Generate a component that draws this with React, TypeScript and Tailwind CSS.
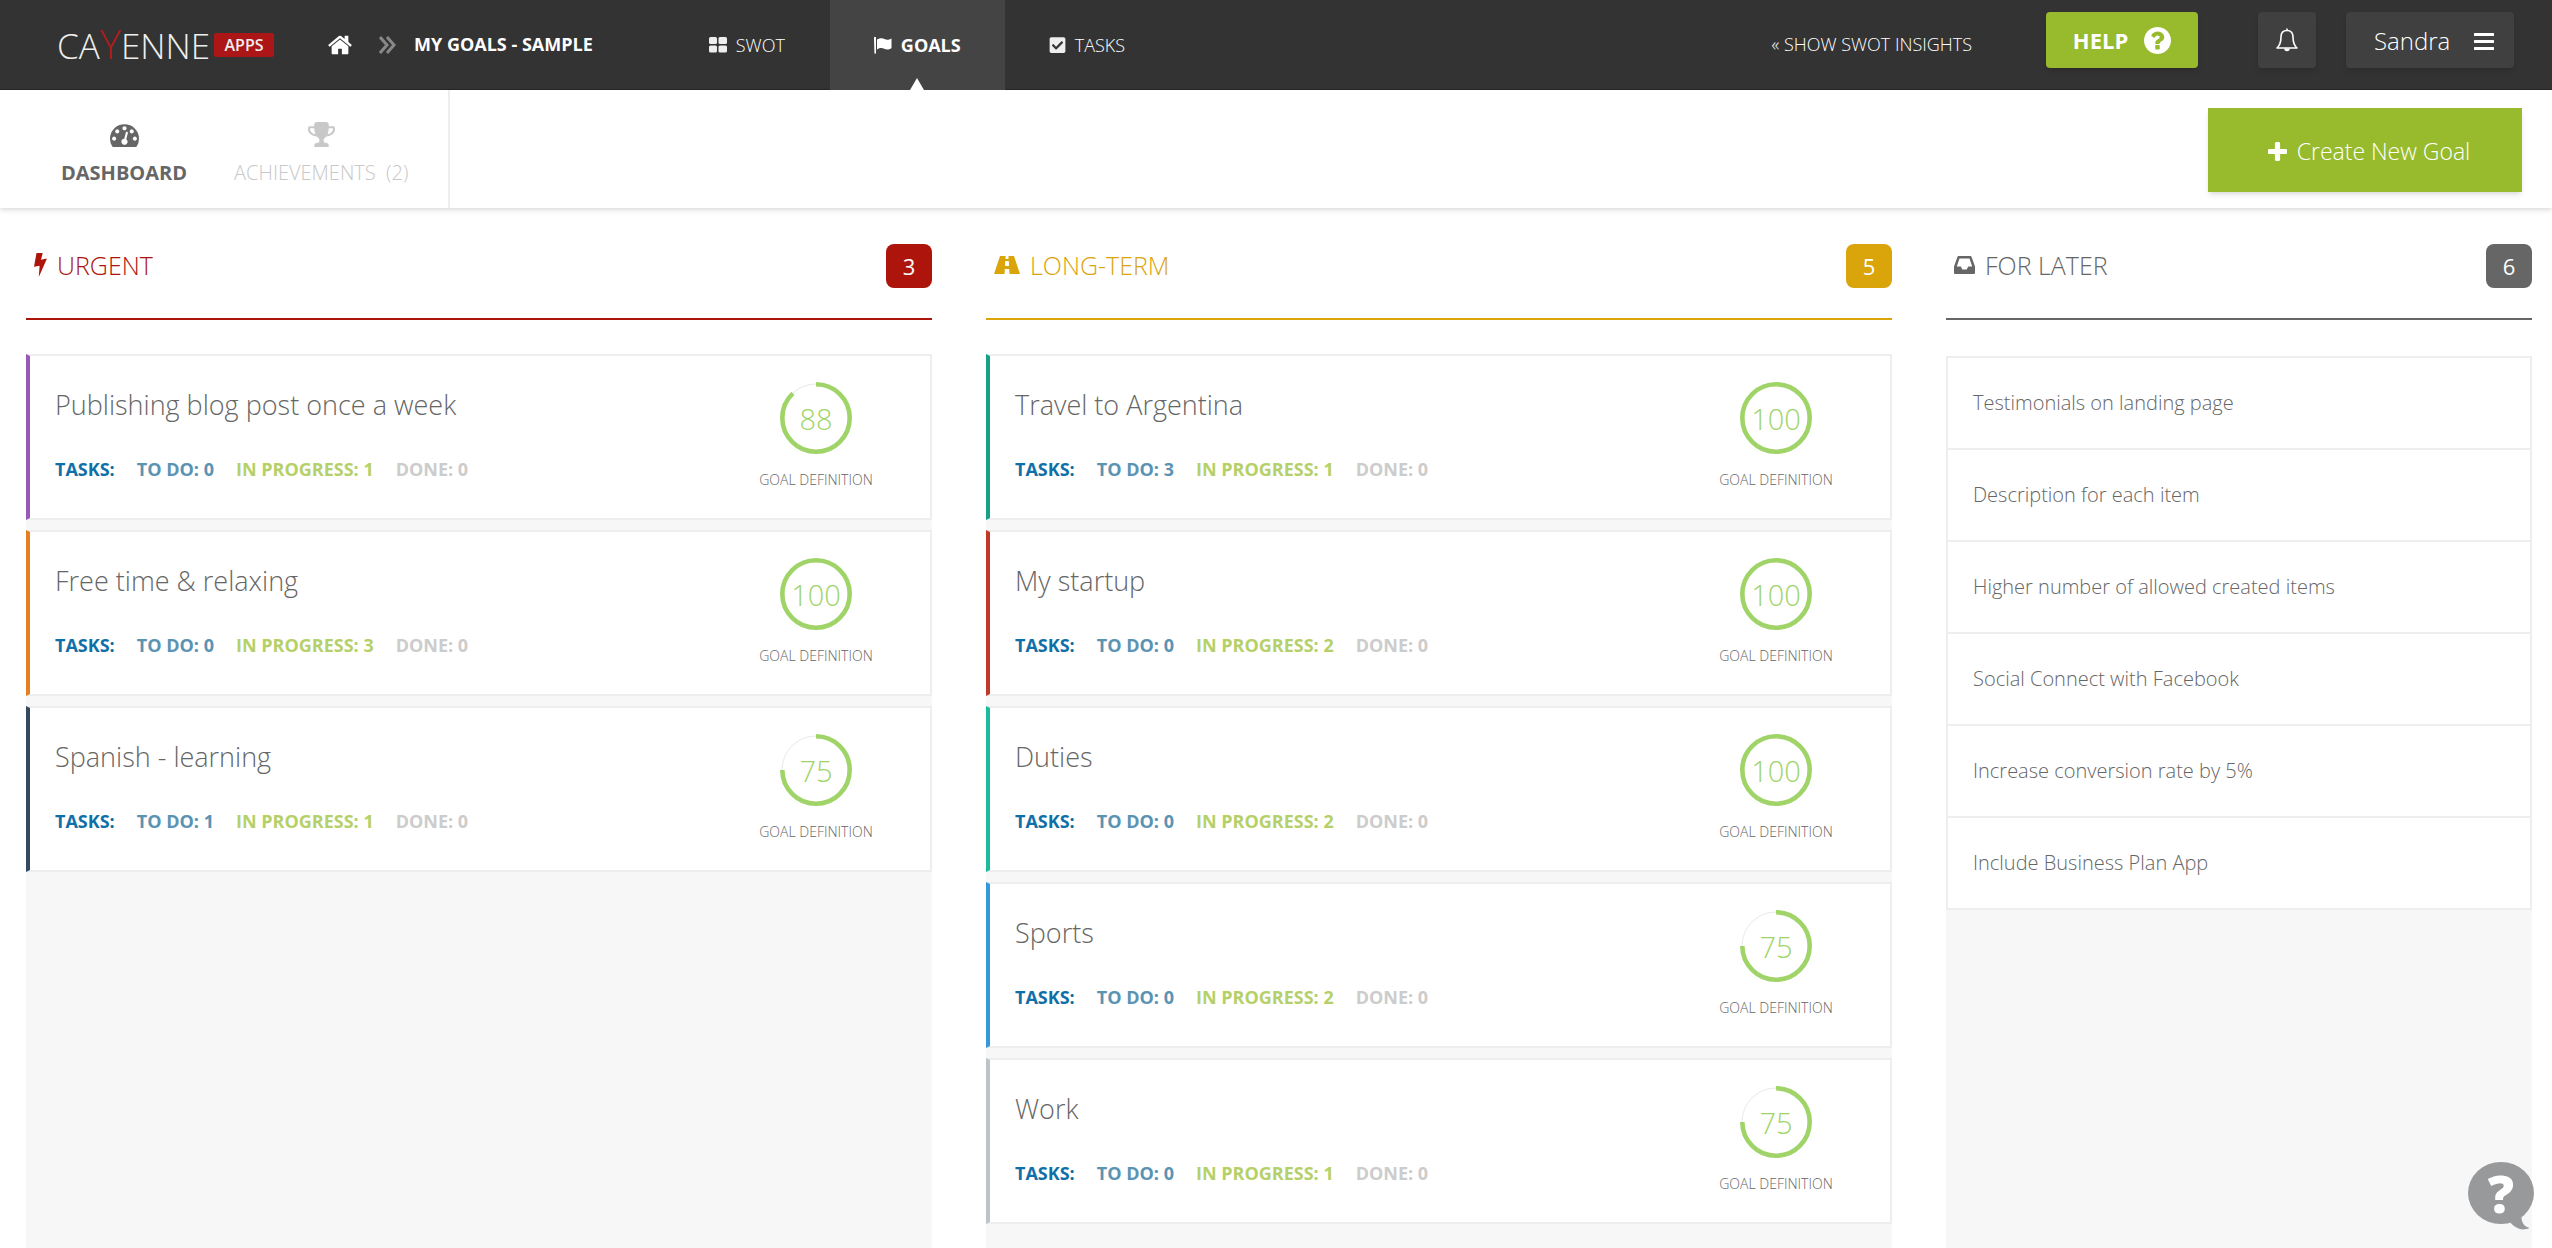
/*Goals dashboard: a top navigation bar, a sub navigation with the create button
and three columns of goals (urgent, long-term and for later) */

import React from 'react';

import { FaCheckSquare } from 'react-icons/fa';

type Goal = {
    title: string //name of the goal
    color: string //color class of the left edge of the card
    score: number //how well the goal is defined, 0 - 100
    todo: number
    progress: number
    done: number
}

type ColumnProps = {
    title: string
    icon: React.ReactNode
    count: number
    headClass: string //text and line color of the heading
    badgeClass: string //background of the counter
    bodyClass: string //space between the heading and the goals
    children: React.ReactNode
}

const urgentGoals: Goal[] = [
    { title: 'Publishing blog post once a week', color: 'border-l-[#9b59b6]', score: 88, todo: 0, progress: 1, done: 0 },
    { title: 'Free time & relaxing', color: 'border-l-[#e67e22]', score: 100, todo: 0, progress: 3, done: 0 },
    { title: 'Spanish - learning', color: 'border-l-[#34495e]', score: 75, todo: 1, progress: 1, done: 0 },
];

const longTermGoals: Goal[] = [
    { title: 'Travel to Argentina', color: 'border-l-[#16a085]', score: 100, todo: 3, progress: 1, done: 0 },
    { title: 'My startup', color: 'border-l-[#c0392b]', score: 100, todo: 0, progress: 2, done: 0 },
    { title: 'Duties', color: 'border-l-[#1abc9c]', score: 100, todo: 0, progress: 2, done: 0 },
    { title: 'Sports', color: 'border-l-[#3498db]', score: 75, todo: 0, progress: 2, done: 0 },
    { title: 'Work', color: 'border-l-[#bdc3c7]', score: 75, todo: 0, progress: 1, done: 0 },
];

const laterGoals: string[] = [
    'Testimonials on landing page',
    'Description for each item',
    'Higher number of allowed created items',
    'Social Connect with Facebook',
    'Increase conversion rate by 5%',
    'Include Business Plan App',
];

//icons drawn on a 1792 grid
const HomeIcon = () => (
    <svg viewBox="0 0 1792 1792" className="w-[26px] h-[26px] fill-white" aria-hidden="true">
        <path d="M1472 992v480q0 26-19 45t-45 19h-384v-384h-256v384h-384q-26 0-45-19t-19-45v-480q0-1 .5-3t.5-3l575-474 575 474q1 2 1 6zm223-69l-62 74q-8 9-21 11h-3q-13 0-21-7l-692-577-692 577q-12 8-24 7-13-2-21-11l-62-74q-8-10-7-23.5t11-21.5l719-599q32-26 76-26t76 26l244 204v-195q0-14 9-23t23-9h192q14 0 23 9t9 23v408l219 182q10 8 11 21.5t-7 23.5z" />
    </svg>
);

const DashboardIcon = () => (
    <svg viewBox="0 0 1792 1792" className="w-[29px] h-[29px] fill-current" aria-hidden="true">
        <path d="M384 1152q0-53-37.5-90.5t-90.5-37.5-90.5 37.5-37.5 90.5 37.5 90.5 90.5 37.5 90.5-37.5 37.5-90.5zm192-448q0-53-37.5-90.5t-90.5-37.5-90.5 37.5-37.5 90.5 37.5 90.5 90.5 37.5 90.5-37.5 37.5-90.5zm428 481l101-382q6-26-7.5-48.5t-38.5-29.5-48 6.500-30 39.500l-101 382q-60 5-107 43.500t-63 98.500q-20 77 20 146t117 89 146-20 89-117q16-60-6-117t-72-91zm660-33q0-53-37.5-90.5t-90.5-37.5-90.5 37.5-37.5 90.5 37.5 90.5 90.5 37.5 90.5-37.5 37.5-90.5zm-640-640q0-53-37.5-90.5t-90.5-37.5-90.5 37.5-37.5 90.5 37.5 90.5 90.5 37.5 90.5-37.5 37.5-90.5zm448 192q0-53-37.5-90.5t-90.5-37.5-90.5 37.5-37.5 90.5 37.5 90.5 90.5 37.5 90.5-37.5 37.5-90.5zm320 448q0 261-141 483-19 29-54 29h-1402q-35 0-54-29-141-221-141-483 0-182 71-348t191-286 286-191 348-71 348 71 286 191 191 286 71 348z" />
    </svg>
);

const TrophyIcon = () => (
    <svg viewBox="0 0 1792 1792" className="w-[29px] h-[29px] fill-current" aria-hidden="true">
        <path d="M522 883q-74-162-74-371h-256v96q0 78 94.5 162t235.5 113zm1078-275v-96h-256q0 209-74 371 141-29 235.5-113t94.5-162zm128-128v128q0 71-41.5 143t-112 130-173 97.5-215.5 44.5q-42 54-95 95-38 34-52.5 72.5t-14.5 89.5q0 54 30.5 91t97.5 37q75 0 133.5 45.5t58.5 114.5v64q0 14-9 23t-23 9h-832q-14 0-23-9t-9-23v-64q0-69 58.5-114.5t133.5-45.5q67 0 97.5-37t30.5-91q0-51-14.5-89.5t-52.5-72.5q-53-41-95-95-113-5-215.5-44.5t-173-97.5-112-130-41.5-143v-128q0-40 28-68t68-28h288v-96q0-66 47-113t113-47h576q66 0 113 47t47 113v96h288q40 0 68 28t28 68z" />
    </svg>
);

const QuestionIcon = () => (
    <svg viewBox="128 128 1536 1536" className="w-[27px] h-[27px] fill-white" aria-hidden="true">
        <path d="M1024 1376v-192q0-14-9-23t-23-9h-192q-14 0-23 9t-9 23v192q0 14 9 23t23 9h192q14 0 23-9t9-23zm256-672q0-88-55.5-163t-138.5-116-170-41q-243 0-371 213-15 24 8 42l132 100q7 6 19 6 16 0 25-12 53-68 86-92 34-24 86-24 48 0 85.5 26t37.5 59q0 38-20 61t-68 45q-63 28-115.5 86.5t-52.5 125.5v36q0 14 9 23t23 9h192q14 0 23-9t9-23q0-19 21.5-49.5t54.5-49.5q32-18 49-28.5t46-35 44.5-48 28-60.5 12.5-81zm384 192q0 209-103 385.5t-279.5 279.5-385.5 103-385.5-103-279.5-279.5-103-385.5 103-385.5 279.5-279.5 385.5-103 385.5 103 279.5 279.5 103 385.5z" />
    </svg>
);

const PlusIcon = () => (
    <svg viewBox="192 128 1408 1408" className="w-[19px] h-[19px] fill-white" aria-hidden="true">
        <path d="M1600 736v192q0 40-28 68t-68 28h-416v416q0 40-28 68t-68 28h-192q-40 0-68-28t-28-68v-416h-416q-40 0-68-28t-28-68v-192q0-40 28-68t68-28h416v-416q0-40 28-68t68-28h192q40 0 68 28t28 68v416h416q40 0 68 28t28 68z" />
    </svg>
);

//smaller icons drawn at their own size
const ChevronsIcon = () => (
    <svg viewBox="0 0 17 18" className="w-[17px] h-[18px] fill-none stroke-[#888]" strokeWidth="3" aria-hidden="true">
        <path d="M1 1l7 8-7 8M8 1l7 8-7 8" />
    </svg>
);

const GridIcon = () => (
    <svg viewBox="0 0 18 16" className="w-[18px] h-4 fill-[#eee]" aria-hidden="true">
        <rect width="8" height="7" rx="1.5" />
        <rect x="9.5" width="8.5" height="7" rx="1.5" />
        <rect y="8.5" width="8" height="7" rx="1.5" />
        <rect x="9.5" y="8.5" width="8.5" height="7" rx="1.5" />
    </svg>
);

const FlagIcon = () => (
    <svg viewBox="0 0 18 17" className="w-[18px] h-[17px] fill-white" aria-hidden="true">
        <path d="M0 .8a1 1 0 0 1 2 0V16a.8.8 0 0 1-1.6 0zM3 2.6c3-1.7 5.2-1.8 7.5-.6 2.5 1.3 4.5.5 7-.6v9.8c-2.8 1.5-4.8 1.8-7.3.6-2.5-1.2-4.5-.8-7.2.7z" />
    </svg>
);

const BellIcon = () => (
    <svg viewBox="0 0 22 24" className="w-[22px] h-6 fill-none stroke-white" strokeWidth="1.6" strokeLinejoin="round" aria-hidden="true">
        <path d="M11 2.5c-4 0-6 2.8-6 6.5 0 5.5-1.2 8.5-4 11h20c-2.8-2.5-4-5.5-4-11 0-3.7-2-6.5-6-6.5zM11 .5v2" />
        <path d="M8.2 20.500a2.800 2.800 0 0 0 5.600 0z" className="fill-white stroke-none" />
    </svg>
);

const BarsIcon = () => (
    <svg viewBox="0 0 20 17" className="w-5 h-[17px] fill-white" aria-hidden="true">
        <rect width="20" height="3" rx=".5" />
        <rect y="7" width="20" height="3" rx=".5" />
        <rect y="14" width="20" height="3" rx=".5" />
    </svg>
);

const BoltIcon = () => (
    <svg viewBox="0 0 13 24" className="w-[13px] h-6 fill-current" aria-hidden="true">
        <path d="M2.5 0h6.200L7 6.800l6-1.300L4.800 24l.8-11.300L0 13.800z" />
    </svg>
);

const RoadIcon = () => (
    <svg viewBox="0 0 26 18" className="w-[26px] h-[18px] fill-current" aria-hidden="true">
        <path fillRule="evenodd" d="M6 0h14l6 18H0zM11.5 0h3v3h-3zM11.2 5h3.600l.2 5h-4zM10.8 13h4.400l.3 5h-5z" />
    </svg>
);

const InboxIcon = () => (
    <svg viewBox="0 0 21 18" className="w-[21px] h-[18px] fill-current" aria-hidden="true">
        <path fillRule="evenodd" d="M4.5 0h12q.8 0 1 .8L21 10.500V17q0 1-1 1H1q-1 0-1-1v-6.500L3.500.8q.2-.8 1-.8zM5.500 2.500L2.800 10.500h4l1.500 3h4.400l1.500-3h4L15.500 2.500z" />
    </svg>
);

//ring that is filled clockwise up to the score
const ScoreRing = ({ score }: { score: number }) => (
    <div className="relative w-[72px] h-[72px]">
        <svg viewBox="0 0 72 72" className="w-full h-full -rotate-90 fill-none" aria-hidden="true">
            <circle cx="36" cy="36" r="34" className="stroke-[#e8e8e8]" />
            <circle
                cx="36"
                cy="36"
                r="33.7"
                pathLength="100"
                strokeWidth="4.6"
                strokeDasharray={score < 100 ? `${score} 100` : undefined}
                className="stroke-[#a0d468]"
            />
        </svg>
        <span
            className="absolute inset-0 flex items-center justify-center text-[29px]
            leading-none font-light text-[#a0d468]"
        >
            {score}
        </span>
    </div>
);

const GoalCard = ({ title, color, score, todo, progress, done }: Goal) => {
    return (
        <article
            className={`flex justify-between h-[166px] bg-white border-2 border-l-4
            border-[#eee] pl-[25px] ${color}`}
        >
            <div>
                <h3 className="pt-[29px] text-[27px] leading-10 font-light">{title}</h3>
                <p className="flex gap-[22px] pt-8 text-[18px] leading-6 font-bold">
                    <span className="text-[#0f6fa8]">TASKS:</span>
                    <span className="text-[#5b93b3]">TO DO: {todo}</span>
                    <span className="text-[#b6d069]">IN PROGRESS: {progress}</span>
                    <span className="text-[#ccc]">DONE: {done}</span>
                </p>
            </div>

            {/*how complete the definition of the goal is */}
            <div className="flex flex-col items-center w-[228px] pt-[26px]">
                <ScoreRing score={score} />
                <p className="mt-4 text-[14px] leading-5 font-light">GOAL DEFINITION</p>
            </div>
        </article>
    );
};

const Column = ({ title, icon, count, headClass, badgeClass, bodyClass, children }: ColumnProps) => {
    return (
        <section className="flex flex-col">
            <div className={`flex items-start justify-between h-[76px] border-b-2 pl-2 ${headClass}`}>
                <h2 className="flex items-center gap-[10px] text-[25px] leading-[42px] font-light">
                    {icon}
                    {title}
                </h2>
                <span
                    className={`flex items-center justify-center w-[46px] h-11 rounded-lg
                    text-[22px] text-white ${badgeClass}`}
                >
                    {count}
                </span>
            </div>
            <div className={`flex-1 bg-[#f7f7f7] ${bodyClass}`}>{children}</div>
        </section>
    );
};

const App = () => {
    return (
        <div className="flex flex-col min-h-screen bg-white font-['Open_Sans',sans-serif] text-[#666]">

            {/*top bar */}
            <header
                className="flex items-center h-[90px] bg-[#333] border-b border-[#2a2628]
                pl-[57px] pr-[38px] text-[18px] text-white"
            >
                <a href="#" className="flex items-center text-[#eee]">
                    <span className="text-[35px] leading-[50px] font-light">
                        CA<span className="text-[40px] leading-[50px] text-[#ac1c1c]">Y</span>ENNE
                    </span>
                    <span
                        className="ml-1 flex items-center justify-center w-[60px] h-6 rounded-xs
                        bg-[#ac1616] text-[16px] font-semibold"
                    >
                        APPS
                    </span>
                </a>
                <a href="#" aria-label="Home" className="ml-[53px]">
                    <HomeIcon />
                </a>
                <span className="ml-[26px]">
                    <ChevronsIcon />
                </span>
                <h1 className="ml-[18px] font-bold">MY GOALS - SAMPLE</h1>

                <nav className="flex self-stretch ml-[71px] -mb-px">
                    <a href="#" className="flex items-center gap-[9px] px-[45px] font-light">
                        <GridIcon />
                        SWOT
                    </a>
                    <a
                        href="#"
                        aria-current="page"
                        className="relative flex items-center gap-[9px] px-11 bg-[#444] font-bold"
                    >
                        <FlagIcon />
                        GOALS
                        <span
                            className="absolute bottom-0 left-1/2 -translate-x-1/2 border-x-[7px]
                            border-b-12 border-x-transparent border-b-white"
                        />
                    </a>
                    <a href="#" className="flex items-center gap-[9px] px-11 font-light">
                        <FaCheckSquare className="w-[17px] h-[18px] fill-[#eee]" />
                        TASKS
                    </a>
                </nav>

                <a href="#" className="ml-auto font-light">« SHOW SWOT INSIGHTS</a>
                <div className="flex self-start mt-3 ml-[74px]">
                    <button
                        className="flex items-center justify-center gap-4 w-[152px] h-14 rounded-sm
                        bg-[#98bb2e] text-[22px] font-bold shadow-md"
                    >
                        HELP
                        <QuestionIcon />
                    </button>
                    <button
                        aria-label="Notifications"
                        className="flex items-center justify-center w-[58px] h-14 ml-[60px]
                        rounded-sm bg-[#404040] shadow-md"
                    >
                        <BellIcon />
                    </button>
                    <button
                        className="flex items-center justify-between w-[168px] h-14 ml-[30px] pl-7
                        pr-5 pt-0.5 rounded-sm bg-[#404040] text-[24px] font-light shadow-md"
                    >
                        Sandra
                        <BarsIcon />
                    </button>
                </div>
            </header>

            {/*sub navigation */}
            <div className="flex justify-between h-[118px] pr-[30px] shadow-[0_2px_5px_rgba(0,0,0,0.15)]">
                <nav className="flex gap-[47px] pt-[30px] pl-[61px] pr-10 border-r-2 border-[#eee] text-[20px] leading-7">
                    <a href="#" aria-current="page" className="flex flex-col items-center gap-[10px] font-bold">
                        <DashboardIcon />
                        DASHBOARD
                    </a>
                    <a href="#" className="flex flex-col items-center gap-[10px] font-light text-[#c8c8c8]">
                        <TrophyIcon />
                        <span className="whitespace-pre">ACHIEVEMENTS  (2)</span>
                    </a>
                </nav>
                <button
                    className="flex items-center justify-center gap-[10px] w-[314px] h-[84px] mt-[18px]
                    pt-0.5 pl-2 bg-[#98bb2e] text-[23px] font-light text-white shadow-md"
                >
                    <PlusIcon />
                    Create New Goal
                </button>
            </div>

            {/*goal columns */}
            <main className="flex-1 grid grid-cols-[906fr_906fr_586fr] gap-[54px] pt-9 pl-[26px] pr-5">
                <Column
                    title="URGENT"
                    icon={<BoltIcon />}
                    count={3}
                    headClass="border-[#ac140c] text-[#ac140c]"
                    badgeClass="bg-[#ac140c]"
                    bodyClass="mt-[34px]"
                >
                    <div className="flex flex-col gap-[10px]">
                        {
                            urgentGoals.map((goal) => <GoalCard key={goal.title} {...goal} />)
                        }
                    </div>
                </Column>

                <Column
                    title="LONG-TERM"
                    icon={<RoadIcon />}
                    count={5}
                    headClass="border-[#d9a50b] text-[#d9a50b]"
                    badgeClass="bg-[#d9a50b]"
                    bodyClass="mt-[34px]"
                >
                    <div className="flex flex-col gap-[10px]">
                        {
                            longTermGoals.map((goal) => <GoalCard key={goal.title} {...goal} />)
                        }
                    </div>
                </Column>

                <Column
                    title="FOR LATER"
                    icon={<InboxIcon />}
                    count={6}
                    headClass="border-[#666] text-[#666]"
                    badgeClass="bg-[#666]"
                    bodyClass="mt-9"
                >
                    <ul className="bg-white border-2 border-b-0 border-[#eee]">
                        {
                            laterGoals.map((title) => (
                                <li
                                    key={title}
                                    className="flex items-center h-[92px] pl-[25px] border-b-2
                                    border-[#eee] text-[20px] font-light"
                                >
                                    {title}
                                </li>
                            ))
                        }
                    </ul>
                </Column>
            </main>

            {/*floating help bubble */}
            <button
                aria-label="Open help"
                className="fixed right-[18px] bottom-[18px] w-[66px] h-[68px] text-white"
            >
                <svg viewBox="0 0 66 68" className="w-full h-full fill-[#97999b]" aria-hidden="true">
                    <ellipse cx="33" cy="31" rx="33" ry="31" />
                    <path d="M42 60c4 5 11 10 19.5 6-5-1.5-8-5-8-11z" />
                </svg>
                <span
                    className="absolute inset-x-0 top-0 text-center text-[52px] leading-[62px] font-extrabold"
                >
                    ?
                </span>
            </button>
        </div>
    );
};

export default App;
